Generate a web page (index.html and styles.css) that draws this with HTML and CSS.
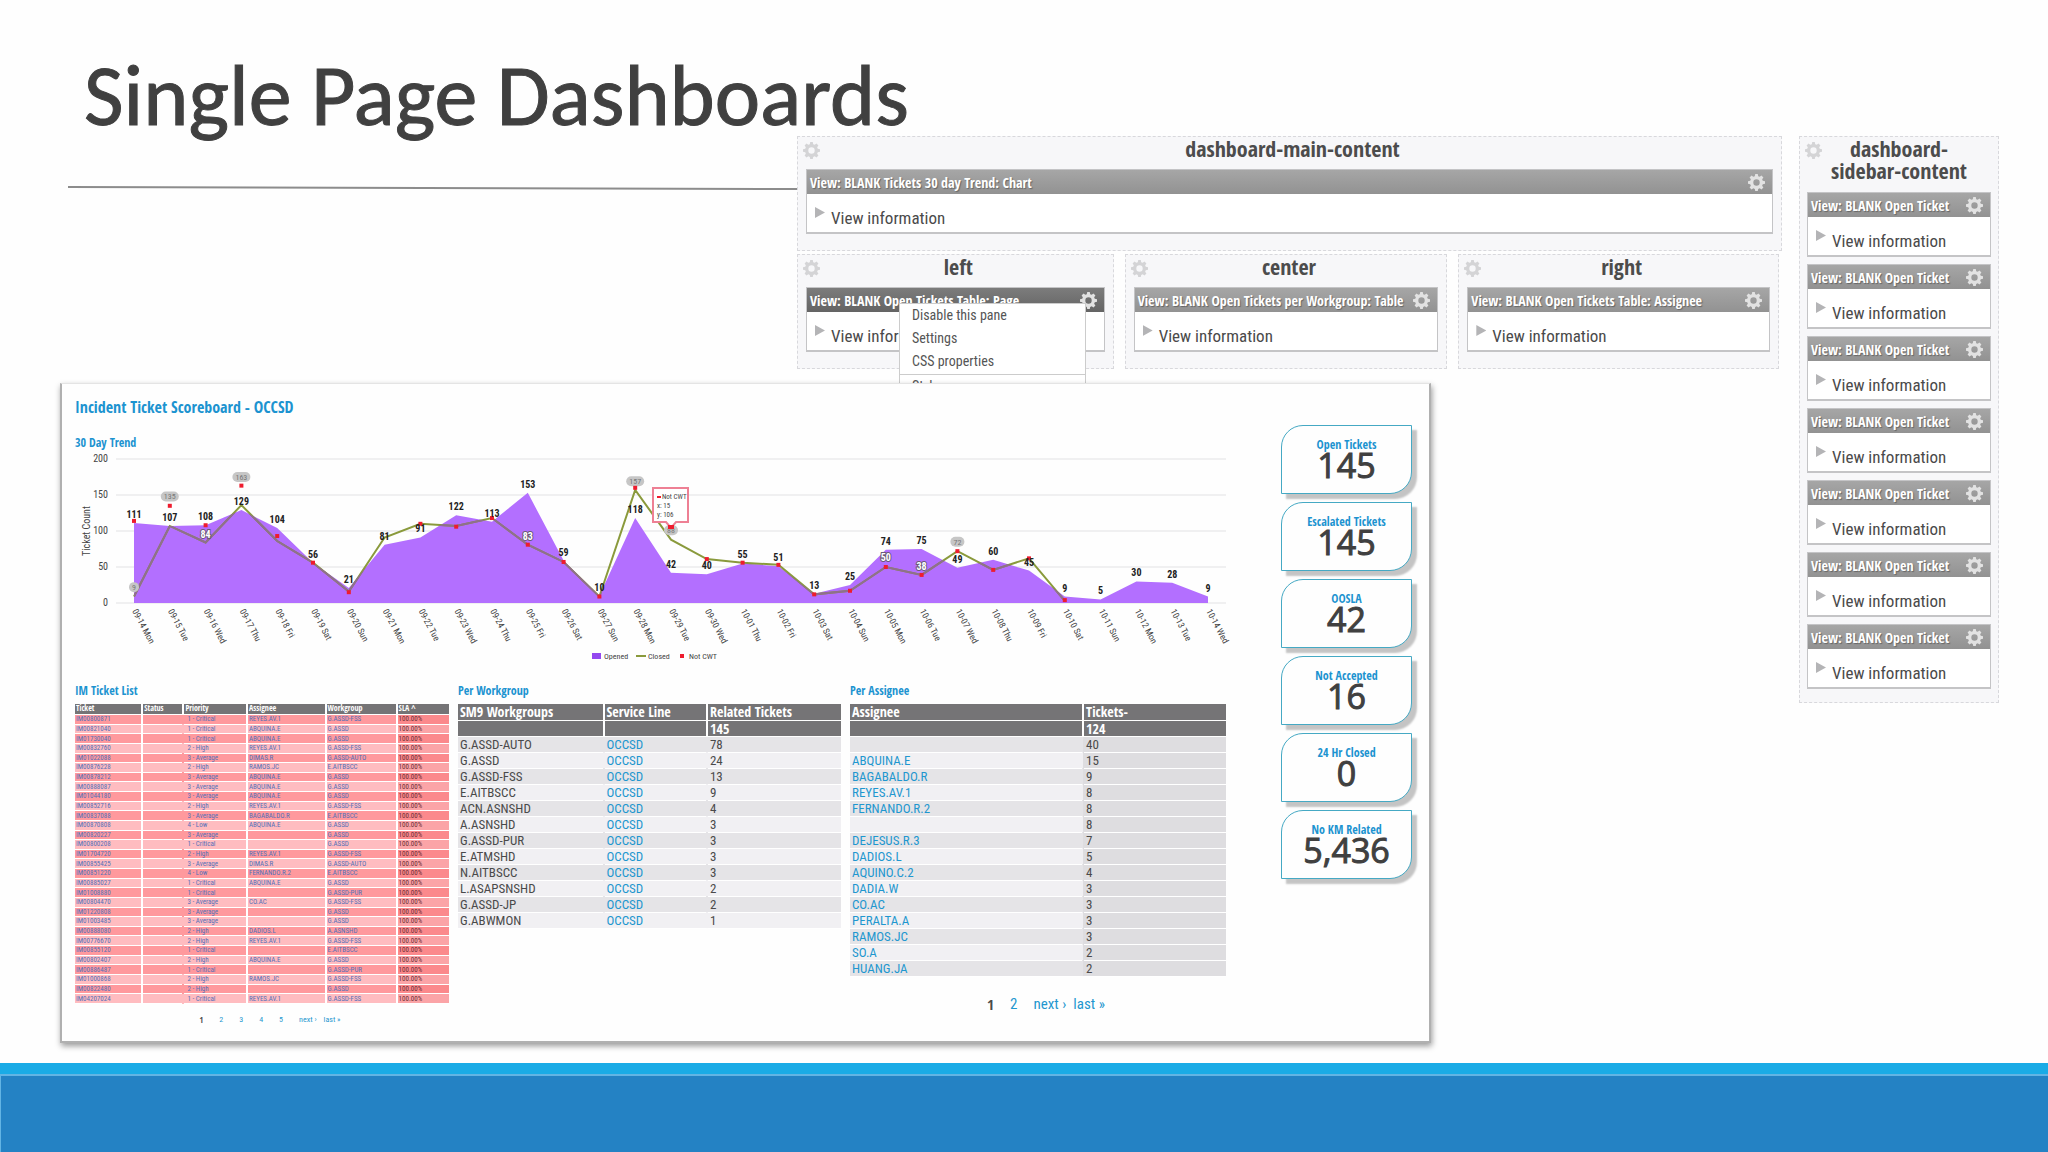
FILE: index.html
```html
<!DOCTYPE html>
<html lang="en">
<head>
    <meta charset="UTF-8">
    <meta name="viewport" content="width=device-width, initial-scale=1.0">
    <title>Single Page Dashboards</title>
    <link rel="stylesheet" href="styles.css">
</head>
<body>

    <!-- Shared icons -->
    <svg class="icon-defs" aria-hidden="true">
        <symbol id="gear" viewBox="0 0 16 16">
            <path fill-rule="evenodd" d="M6.8 0h2.4l.4 2 1.4.6 1.7-1.2 1.8 1.8-1.2 1.7.6 1.4 2.1.5v2.4l-2.1.5-.6 1.4 1.2 1.7-1.8 1.8-1.7-1.2-1.4.6-.4 2H6.800l-.4-2-1.400-.6-1.700 1.200-1.800-1.800 1.200-1.700-.6-1.400L0 9.200V6.800l2.100-.5.6-1.400-1.200-1.700 1.800-1.800L5 2.600 6.400 2zM8 5a3 3 0 1 0 0 6 3 3 0 0 0 0-6z"/>
        </symbol>
    </svg>

    <main class="slide">

        <!-- Title -->
        <header class="slide-header">
            <h1>Single Page Dashboards</h1>
            <svg class="title-rule" viewBox="0 0 728 4" preserveAspectRatio="none" aria-hidden="true">
                <line x1="0" y1="1" x2="728" y2="3"/>
            </svg>
        </header>

        <!-- Panel regions -->
        <section class="regions">
            <div class="region">
                <button class="region-gear" aria-label="Region settings"><svg><use href="#gear"/></svg></button>
                <h2>dashboard-main-content</h2>
                <div class="pane">
                    <div class="pane-head"><span>View: BLANK Tickets 30 day Trend: Chart</span><button aria-label="Pane settings"><svg><use href="#gear"/></svg></button></div>
                    <details><summary>View information</summary></details>
                </div>
            </div>
            <div class="region-row">
                <div class="region">
                    <button class="region-gear" aria-label="Region settings"><svg><use href="#gear"/></svg></button>
                    <h2>left</h2>
                    <div class="pane pane-active">
                        <div class="pane-head"><span>View: BLANK Open Tickets Table: Page</span><button aria-label="Pane settings"><svg><use href="#gear"/></svg></button></div>
                        <details><summary>View information</summary></details>
                        <div class="menu">
                            <a href="#">Disable this pane</a>
                            <a href="#">Settings</a>
                            <a href="#">CSS properties</a>
                            <a href="#" class="menu-next">Style</a>
                        </div>
                    </div>
                </div>
                <div class="region">
                    <button class="region-gear" aria-label="Region settings"><svg><use href="#gear"/></svg></button>
                    <h2>center</h2>
                    <div class="pane">
                        <div class="pane-head"><span>View: BLANK Open Tickets per Workgroup: Table</span><button aria-label="Pane settings"><svg><use href="#gear"/></svg></button></div>
                        <details><summary>View information</summary></details>
                    </div>
                </div>
                <div class="region">
                    <button class="region-gear" aria-label="Region settings"><svg><use href="#gear"/></svg></button>
                    <h2>right</h2>
                    <div class="pane">
                        <div class="pane-head"><span>View: BLANK Open Tickets Table: Assignee</span><button aria-label="Pane settings"><svg><use href="#gear"/></svg></button></div>
                        <details><summary>View information</summary></details>
                    </div>
                </div>
            </div>
        </section>

        <!-- Sidebar region -->
        <aside class="sidebar">
            <div class="region">
                <button class="region-gear" aria-label="Region settings"><svg><use href="#gear"/></svg></button>
                <h2>dashboard-sidebar-content</h2>
                <div class="pane">
                    <div class="pane-head"><span>View: BLANK Open Ticket</span><button aria-label="Pane settings"><svg><use href="#gear"/></svg></button></div>
                    <details><summary>View information</summary></details>
                </div>
                <div class="pane">
                    <div class="pane-head"><span>View: BLANK Open Ticket</span><button aria-label="Pane settings"><svg><use href="#gear"/></svg></button></div>
                    <details><summary>View information</summary></details>
                </div>
                <div class="pane">
                    <div class="pane-head"><span>View: BLANK Open Ticket</span><button aria-label="Pane settings"><svg><use href="#gear"/></svg></button></div>
                    <details><summary>View information</summary></details>
                </div>
                <div class="pane">
                    <div class="pane-head"><span>View: BLANK Open Ticket</span><button aria-label="Pane settings"><svg><use href="#gear"/></svg></button></div>
                    <details><summary>View information</summary></details>
                </div>
                <div class="pane">
                    <div class="pane-head"><span>View: BLANK Open Ticket</span><button aria-label="Pane settings"><svg><use href="#gear"/></svg></button></div>
                    <details><summary>View information</summary></details>
                </div>
                <div class="pane">
                    <div class="pane-head"><span>View: BLANK Open Ticket</span><button aria-label="Pane settings"><svg><use href="#gear"/></svg></button></div>
                    <details><summary>View information</summary></details>
                </div>
                <div class="pane">
                    <div class="pane-head"><span>View: BLANK Open Ticket</span><button aria-label="Pane settings"><svg><use href="#gear"/></svg></button></div>
                    <details><summary>View information</summary></details>
                </div>
            </div>
        </aside>

        <!-- Scoreboard -->
        <section class="scoreboard">
            <div class="board-main">
                <h2>Incident Ticket Scoreboard - OCCSD</h2>
                <h3>30 Day Trend</h3>
                <svg class="chart" id="trendChart" viewBox="0 0 1162 218" role="img" aria-label="30 Day Trend"></svg>

                <div class="tables">
                    <div>
                        <h3>IM Ticket List</h3>
                        <table class="tickets">
                            <thead>
                                <tr><th>Ticket</th><th>Status</th><th>Priority</th><th>Assignee</th><th>Workgroup</th><th>SLA ^</th></tr>
                            </thead>
                            <tbody id="ticketRows"></tbody>
                        </table>
                        <nav class="pager pager-small">
                            <b>1</b><a href="#">2</a><a href="#">3</a><a href="#">4</a><a href="#">5</a><a href="#">next ›</a><a href="#">last »</a>
                        </nav>
                    </div>

                    <div>
                        <h3>Per Workgroup</h3>
                        <table class="summary workgroups">
                            <thead>
                                <tr><th>SM9 Workgroups</th><th>Service Line</th><th>Related Tickets</th></tr>
                                <tr><th></th><th></th><th>145</th></tr>
                            </thead>
                            <tbody>
                                <tr><td>G.ASSD-AUTO</td><td><a href="#">OCCSD</a></td><td>78</td></tr>
                                <tr><td>G.ASSD</td><td><a href="#">OCCSD</a></td><td>24</td></tr>
                                <tr><td>G.ASSD-FSS</td><td><a href="#">OCCSD</a></td><td>13</td></tr>
                                <tr><td>E.AITBSCC</td><td><a href="#">OCCSD</a></td><td>9</td></tr>
                                <tr><td>ACN.ASNSHD</td><td><a href="#">OCCSD</a></td><td>4</td></tr>
                                <tr><td>A.ASNSHD</td><td><a href="#">OCCSD</a></td><td>3</td></tr>
                                <tr><td>G.ASSD-PUR</td><td><a href="#">OCCSD</a></td><td>3</td></tr>
                                <tr><td>E.ATMSHD</td><td><a href="#">OCCSD</a></td><td>3</td></tr>
                                <tr><td>N.AITBSCC</td><td><a href="#">OCCSD</a></td><td>3</td></tr>
                                <tr><td>L.ASAPSNSHD</td><td><a href="#">OCCSD</a></td><td>2</td></tr>
                                <tr><td>G.ASSD-JP</td><td><a href="#">OCCSD</a></td><td>2</td></tr>
                                <tr><td>G.ABWMON</td><td><a href="#">OCCSD</a></td><td>1</td></tr>
                            </tbody>
                        </table>
                    </div>

                    <div>
                        <h3>Per Assignee</h3>
                        <table class="summary assignees">
                            <thead>
                                <tr><th>Assignee</th><th>Tickets-</th></tr>
                                <tr><th></th><th>124</th></tr>
                            </thead>
                            <tbody>
                                <tr><td></td><td>40</td></tr>
                                <tr><td><a href="#">ABQUINA.E</a></td><td>15</td></tr>
                                <tr><td><a href="#">BAGABALDO.R</a></td><td>9</td></tr>
                                <tr><td><a href="#">REYES.AV.1</a></td><td>8</td></tr>
                                <tr><td><a href="#">FERNANDO.R.2</a></td><td>8</td></tr>
                                <tr><td></td><td>8</td></tr>
                                <tr><td><a href="#">DEJESUS.R.3</a></td><td>7</td></tr>
                                <tr><td><a href="#">DADIOS.L</a></td><td>5</td></tr>
                                <tr><td><a href="#">AQUINO.C.2</a></td><td>4</td></tr>
                                <tr><td><a href="#">DADIA.W</a></td><td>3</td></tr>
                                <tr><td><a href="#">CO.AC</a></td><td>3</td></tr>
                                <tr><td><a href="#">PERALTA.A</a></td><td>3</td></tr>
                                <tr><td><a href="#">RAMOS.JC</a></td><td>3</td></tr>
                                <tr><td><a href="#">SO.A</a></td><td>2</td></tr>
                                <tr><td><a href="#">HUANG.JA</a></td><td>2</td></tr>
                            </tbody>
                        </table>
                        <nav class="pager">
                            <b>1</b><a href="#">2</a><a href="#">next ›</a><a href="#">last »</a>
                        </nav>
                    </div>
                </div>
            </div>

            <!-- Counters -->
            <div class="cards">
                <div class="card"><h4>Open Tickets</h4><p>145</p></div>
                <div class="card"><h4>Escalated Tickets</h4><p>145</p></div>
                <div class="card"><h4>OOSLA</h4><p>42</p></div>
                <div class="card"><h4>Not Accepted</h4><p>16</p></div>
                <div class="card"><h4>24 Hr Closed</h4><p>0</p></div>
                <div class="card"><h4>No KM Related</h4><p>5,436</p></div>
            </div>
        </section>
    </main>

    <footer class="slide-footer"></footer>

    <script src="script.js"></script>
</body>
</html>
```
FILE: styles.css
```css
/* General styles */
* {
    box-sizing: border-box;
}

body {
    margin: 0;
    min-height: 100vh;
    display: flex;
    flex-direction: column;
    background-color: #fefefe;
    color: #4a4a4a;
    font-family: "Roboto Condensed", "Roboto", sans-serif;
}

h1, h2, h3, h4, p {
    margin: 0;
}

h2, h3, h4, th, b, .pane-head {
    font-family: "Open Sans Condensed", "Roboto Condensed", sans-serif;
    font-weight: bold;
}

a {
    color: #1f97cf;
    text-decoration: none;
}

button {
    padding: 0;
    border: none;
    background: none;
    cursor: pointer;
}

.icon-defs {
    position: absolute;
    width: 0;
    height: 0;
}

/* Slide layout */
.slide {
    flex: 1;
    display: grid;
    grid-template-columns: minmax(0, 797fr) minmax(0, 634fr) minmax(0, 368fr) minmax(0, 249fr);
    grid-template-rows: auto 1fr;
}

.slide-header {
    grid-column: 1;
    grid-row: 1;
    padding: 46px 0 0 68px;
}

.slide-header h1 {
    padding-left: 16px;
    font-family: "Carlito", "Lato", sans-serif;
    font-size: 86px;
    font-weight: 400;
    line-height: 100px;
    color: #404040;
    -webkit-text-stroke: 1px #404040;
    white-space: nowrap;
}

.title-rule {
    display: block;
    width: 100%;
    height: 4px;
    margin-top: 40px;
}

.title-rule line {
    stroke: #8c8c8c;
    stroke-width: 2;
}

.slide-footer {
    height: 89px;
    border-top: 11px solid #1aabe6;
    background-color: #2482c4;
    box-shadow: inset 1px 2px 0 #62b4e4;
}

/* Panel regions */
.regions {
    grid-column: 2 / 4;
    grid-row: 1;
    padding: 136px 17px 14px 0;
}

.region-row {
    display: grid;
    grid-template-columns: 317fr 323fr 321fr;
    gap: 11px;
    margin: 3px 3px 0 0;
}

.region {
    position: relative;
    padding: 0 8px 16px;
    border: 1px dashed #d8d8dc;
    background-color: #f7f7f9;
}

.region h2 {
    padding: 0 16px 10px 22px;
    font-size: 22px;
    line-height: 22px;
    text-align: center;
    color: #4c4c4c;
}

.region-gear {
    position: absolute;
    top: 5px;
    left: 5px;
}

.region-gear svg {
    display: block;
    width: 17px;
    height: 17px;
    fill: #d4d4d6;
}

.sidebar {
    grid-column: 4;
    grid-row: 1 / 3;
    padding: 136px 49px 0 0;
}

.sidebar .region {
    padding: 0 7px 6px;
}

.sidebar h2 {
    padding: 0 16px 11px;
}

.sidebar .pane {
    margin-bottom: 7px;
}

.pane {
    position: relative;
    border: 1px solid #c4c4c6;
    border-bottom-width: 2px;
    background-color: #fff;
}

.pane-head {
    display: flex;
    align-items: center;
    justify-content: space-between;
    height: 24px;
    padding: 0 7px 0 3px;
    background: linear-gradient(#a6a6a6, #929292);
    color: #fff;
    font-size: 14px;
    text-shadow: 1px 1px 1px #666;
    white-space: nowrap;
}

.pane-head svg {
    display: block;
    width: 17px;
    height: 17px;
    fill: #e2e2e2;
}

.pane-active .pane-head {
    background: linear-gradient(#7c7c7c, #646464);
}

.pane summary {
    display: flex;
    gap: 6px;
    height: 38px;
    padding: 13px 8px 0;
    font-size: 17px;
    line-height: 22px;
    list-style: none;
    cursor: pointer;
}

.pane summary::before {
    content: "";
    width: 10px;
    height: 11px;
    background-color: #b4b4b6;
    clip-path: polygon(0 0, 100% 50%, 0 100%);
}

.menu {
    position: absolute;
    top: 15px;
    left: 92px;
    width: 187px;
    padding-bottom: 8px;
    border: 1px solid #ccc;
    background-color: #fff;
}

.menu a {
    display: block;
    padding-left: 12px;
    color: #555;
    font-size: 14px;
    line-height: 23px;
}

.menu .menu-next {
    margin-top: 1px;
    border-top: 1px solid #ccc;
}

/* Scoreboard */
.scoreboard {
    grid-column: 1 / 3;
    grid-row: 2;
    position: relative;
    display: flex;
    gap: 44px;
    margin: 0 0 20px 60px;
    padding: 11px 17px 13px 13px;
    border: 2px solid #b0b0b0;
    border-top: 1px solid #e4e4e4;
    background-color: #fefefe;
    box-shadow: 1px 3px 6px rgba(0, 0, 0, 0.4);
}

.board-main {
    flex: 1;
    min-width: 0;
}

.scoreboard h2 {
    color: #1c93d0;
    font-size: 16px;
    line-height: 24px;
}

.scoreboard h3 {
    margin-top: 16px;
    color: #1c93d0;
    font-size: 12px;
    line-height: 16px;
}

/* Chart */
.chart {
    display: block;
    width: 100%;
}

.chart text {
    font-size: 10px;
    fill: #444;
}

.chart .grid {
    stroke: #e2e2e4;
}

.chart .area {
    fill: #b36fff;
}

.chart .closed {
    fill: none;
    stroke: #8a9a3c;
    stroke-width: 2;
}

.chart .closed-over {
    fill: none;
    stroke: #8f6f8c;
    stroke-width: 2;
}

.chart .dot {
    fill: #ee1c2e;
}

.chart .swatch {
    fill: #9448f0;
}

.chart .value {
    font-weight: bold;
    text-anchor: middle;
    fill: #222;
}

.chart .value-light {
    font-weight: bold;
    text-anchor: middle;
    fill: #fff;
    stroke: #6a5a78;
    stroke-width: 2;
    paint-order: stroke;
}

.chart .bubble {
    fill: #c6c6c6;
}

.chart .value-bubble {
    font-size: 8px;
    text-anchor: middle;
    fill: #777;
}

.chart .axis {
    text-anchor: end;
}

.chart .axis-title {
    text-anchor: middle;
}

.chart .day {
    font-size: 9px;
}

.chart .tip {
    fill: #fff;
    stroke: #ee8094;
    stroke-width: 2;
}

.chart .legend {
    font-size: 8px;
}

.chart .tip-text {
    font-size: 7px;
}

/* Tables */
.tables {
    display: grid;
    grid-template-columns: 374fr 383fr 376fr;
    gap: 9px;
    padding-right: 11px;
}

.tables h3 {
    margin: 14px 0 5px;
}

table {
    width: 100%;
    border-collapse: collapse;
    table-layout: fixed;
}

th,
td {
    padding: 0 0 0 2px;
    border-bottom: 1px solid #fff;
    text-align: left;
    white-space: nowrap;
}

th {
    background-color: #757476;
    color: #fff;
}

th + th,
td + td {
    border-left: 2px solid #fff;
}

.summary th,
.summary td {
    height: 16px;
    font-size: 13px;
    line-height: 15px;
}

.summary th {
    font-size: 14px;
}

.summary tbody tr {
    background-color: #f1f0f3;
}

.summary tbody tr:nth-child(odd) {
    background-color: #e5e4e7;
}

.summary tbody td + td {
    border-left-color: transparent;
}

.workgroups th:nth-child(1) { width: 38%; }
.workgroups th:nth-child(2) { width: 27%; }
.assignees th:nth-child(1) { width: 62%; }

.assignees td:nth-child(2) {
    background-color: #dedde0;
}

.tickets {
    height: 300px;
}

.tickets th,
.tickets td {
    padding-left: 1px;
    font-size: 7px;
    line-height: 8px;
}

.tickets th {
    padding-bottom: 2px;
    font-size: 8px;
}

.tickets td {
    color: #5470b8;
}

.tickets tbody tr {
    background-color: #ffbcc0;
}

.tickets tbody tr:nth-child(odd) {
    background-color: #ff999d;
}

.tickets td:nth-child(3) {
    padding-left: 3px;
    border-left-color: transparent;
}

.tickets td:nth-child(6) {
    background-color: rgba(240, 90, 90, 0.25);
    color: #6a2c34;
}

.tickets th:nth-child(1) { width: 18%; }
.tickets th:nth-child(2) { width: 11%; }
.tickets th:nth-child(3) { width: 17%; }
.tickets th:nth-child(4) { width: 21%; }
.tickets th:nth-child(5) { width: 19%; }

/* Pagers */
.pager {
    display: flex;
    justify-content: center;
    gap: 16px;
    margin-top: 18px;
    padding-left: 16px;
    font-size: 15px;
    line-height: 18px;
}

.pager a + a:last-child {
    margin-left: -9px;
}

.pager-small {
    margin-top: 10px;
    font-size: 8px;
    line-height: 12px;
}

/* Counter cards */
.cards {
    flex: 0 0 131px;
    display: flex;
    flex-direction: column;
    gap: 8px;
    padding-top: 30px;
}

.card {
    height: 69px;
    padding-top: 11px;
    border: 1px solid #45a9c4;
    border-radius: 22px 0 22px 0;
    background-color: #fefefe;
    box-shadow: 5px 5px 2px #c4c4c4;
    text-align: center;
}

.card h4 {
    color: #1c93d0;
    font-size: 12px;
    line-height: 16px;
}

.card p {
    font-family: "Open Sans", sans-serif;
    font-size: 34px;
    line-height: 24px;
    color: #404040;
    -webkit-text-stroke: 1px #404040;
}
```
FILE: script.js
```js
// 30 day trend data
const days = ['09-14 Mon', '09-15 Tue', '09-16 Wed', '09-17 Thu', '09-18 Fri', '09-19 Sat', '09-20 Sun',
    '09-21 Mon', '09-22 Tue', '09-23 Wed', '09-24 Thu', '09-25 Fri', '09-26 Sat', '09-27 Sun',
    '09-28 Mon', '09-29 Tue', '09-30 Wed', '10-01 Thu', '10-02 Fri', '10-03 Sat', '10-04 Sun',
    '10-05 Mon', '10-06 Tue', '10-07 Wed', '10-08 Thu', '10-09 Fri', '10-10 Sat', '10-11 Sun',
    '10-12 Mon', '10-13 Tue', '10-14 Wed'];
const opened = [111, 107, 108, 129, 104, 56, 21, 81, 91, 122, 113, 153, 59, 10, 118, 42, 40, 55, 51, 13, 25, 74, 75, 49, 60, 45, 9, 5, 30, 28, 9];
const closed = [9, 107, 84, 136, 86, 56, 16, 91, 110, 107, 118, 81, 57, 9, 157, 88, 61, 56, 53, 12, 17, 50, 39, 72, 46, 62, 3];
const notCwt = [114, 135, 108, 163, 93, 56, 15, null, 110, 106, 118, 81, 57, 9, 160, 106, 61, 56, 53, 12, 17, 50, 39, 72, 46, 62, 4];

// Grey bubbles and light labels: [day index, value on the axis, text]
const bubbles = [[0, 22, '9'], [1, 148, '135'], [3, 175, '163'], [14, 169, '157'], [15, 101, '88'], [23, 85, '72']];
const lights = [[2, 95, '84'], [11, 92, '83'], [21, 62, '50'], [22, 50, '38']];

const x = i => 59 + i * 35.8;
const y = v => 152 - v * 0.72;
const points = list => list.map((v, i) => `${x(i)},${y(v)}`).join(' ');
const areaPoints = `${x(0)},${y(0)} ${points(opened)} ${x(30)},${y(0)}`;

let svg = '';
[0, 50, 100, 150, 200].forEach(v => {
    svg += `<line class="grid" x1="41" x2="1151" y1="${y(v)}" y2="${y(v)}"/>`;
    svg += `<text class="axis" x="33" y="${y(v) + 3}">${v}</text>`;
});
svg += '<text class="axis-title" transform="translate(15 80) rotate(-90)">Ticket Count</text>';
svg += `<clipPath id="areaClip"><polygon points="${areaPoints}"/></clipPath>`;
svg += `<polygon class="area" points="${areaPoints}"/>`;
svg += `<polyline class="closed" points="${points(closed)}"/>`;
svg += `<polyline class="closed-over" clip-path="url(#areaClip)" points="${points(closed)}"/>`;

bubbles.forEach(([i, v, text]) => {
    svg += `<rect class="bubble" x="${x(i) - 3 - text.length * 2}" y="${y(v) - 5}" width="${6 + text.length * 4}" height="10" rx="5"/>`;
    svg += `<text class="value-bubble" x="${x(i)}" y="${y(v) + 3}">${text}</text>`;
});
notCwt.forEach((v, i) => {
    if (v !== null) {
        svg += `<rect class="dot" x="${x(i) - 2}" y="${y(v) - 2}" width="4" height="4"/>`;
    }
});
opened.forEach((v, i) => {
    svg += `<text class="value" x="${x(i)}" y="${y(v) - 5}">${v}</text>`;
});
lights.forEach(([i, v, text]) => {
    svg += `<text class="value-light" x="${x(i)}" y="${y(v) + 3}">${text}</text>`;
});
days.forEach((day, i) => {
    svg += `<text class="day" transform="translate(${x(i) - 2} 160) rotate(62)">${day}</text>`;
});

// Tooltip on 09-29
svg += '<path class="tip" d="M578 37h35v34h-12l-5 6-5-6h-13z"/>';
svg += '<rect class="dot" x="582" y="45" width="4" height="2"/><rect class="dot" x="593" y="74" width="6" height="4"/>';
svg += '<text class="tip-text" x="587" y="48">Not CWT</text><text class="tip-text" x="582" y="57">x: 15</text><text class="tip-text" x="582" y="66">y: 106</text>';

// Legend
svg += '<rect class="swatch" x="517" y="202" width="9" height="6"/><text class="legend" x="529" y="208">Opened</text>';
svg += '<line class="closed" x1="561" x2="571" y1="205" y2="205"/><text class="legend" x="573" y="208">Closed</text>';
svg += '<rect class="dot" x="605" y="203" width="4" height="4"/><text class="legend" x="614" y="208">Not CWT</text>';

document.getElementById('trendChart').innerHTML = svg;

// Ticket list: id, priority, assignee, workgroup
const tickets = [
    ['IM00800871', '1 - Critical', 'REYES.AV.1', 'G.ASSD-FSS'],
    ['IM00821040', '1 - Critical', 'ABQUINA.E', 'G.ASSD'],
    ['IM01730040', '1 - Critical', 'ABQUINA.E', 'G.ASSD'],
    ['IM00832760', '2 - High', 'REYES.AV.1', 'G.ASSD-FSS'],
    ['IM01022088', '3 - Average', 'DIMAS.R', 'G.ASSD-AUTO'],
    ['IM00876228', '2 - High', 'RAMOS.JC', 'E.AITBSCC'],
    ['IM00878212', '3 - Average', 'ABQUINA.E', 'G.ASSD'],
    ['IM00888087', '3 - Average', 'ABQUINA.E', 'G.ASSD'],
    ['IM01044180', '3 - Average', 'ABQUINA.E', 'G.ASSD'],
    ['IM00852716', '2 - High', 'REYES.AV.1', 'G.ASSD-FSS'],
    ['IM00837088', '3 - Average', 'BAGABALDO.R', 'E.AITBSCC'],
    ['IM00870808', '4 - Low', 'ABQUINA.E', 'G.ASSD'],
    ['IM00820227', '3 - Average', '', 'G.ASSD'],
    ['IM00800208', '1 - Critical', '', 'G.ASSD'],
    ['IM01704720', '2 - High', 'REYES.AV.1', 'G.ASSD-FSS'],
    ['IM00855425', '3 - Average', 'DIMAS.R', 'G.ASSD-AUTO'],
    ['IM00851220', '4 - Low', 'FERNANDO.R.2', 'E.AITBSCC'],
    ['IM00885027', '1 - Critical', 'ABQUINA.E', 'G.ASSD'],
    ['IM01008880', '1 - Critical', '', 'G.ASSD-PUR'],
    ['IM00804470', '3 - Average', 'CO.AC', 'G.ASSD-FSS'],
    ['IM01220808', '3 - Average', '', 'G.ASSD'],
    ['IM01003485', '3 - Average', '', 'G.ASSD'],
    ['IM00888080', '2 - High', 'DADIOS.L', 'A.ASNSHD'],
    ['IM00776670', '2 - High', 'REYES.AV.1', 'G.ASSD-FSS'],
    ['IM00855120', '1 - Critical', '', 'E.AITBSCC'],
    ['IM00802407', '2 - High', 'ABQUINA.E', 'G.ASSD'],
    ['IM00886487', '1 - Critical', '', 'G.ASSD-PUR'],
    ['IM01000868', '2 - High', 'RAMOS.JC', 'G.ASSD-FSS'],
    ['IM00822480', '2 - High', '', 'G.ASSD'],
    ['IM04207024', '1 - Critical', 'REYES.AV.1', 'G.ASSD-FSS']
];

document.getElementById('ticketRows').innerHTML = tickets.map(([id, priority, assignee, group]) =>
    `<tr><td>${id}</td><td></td><td>${priority}</td><td>${assignee}</td><td>${group}</td><td>100.00%</td></tr>`
).join('');
```
